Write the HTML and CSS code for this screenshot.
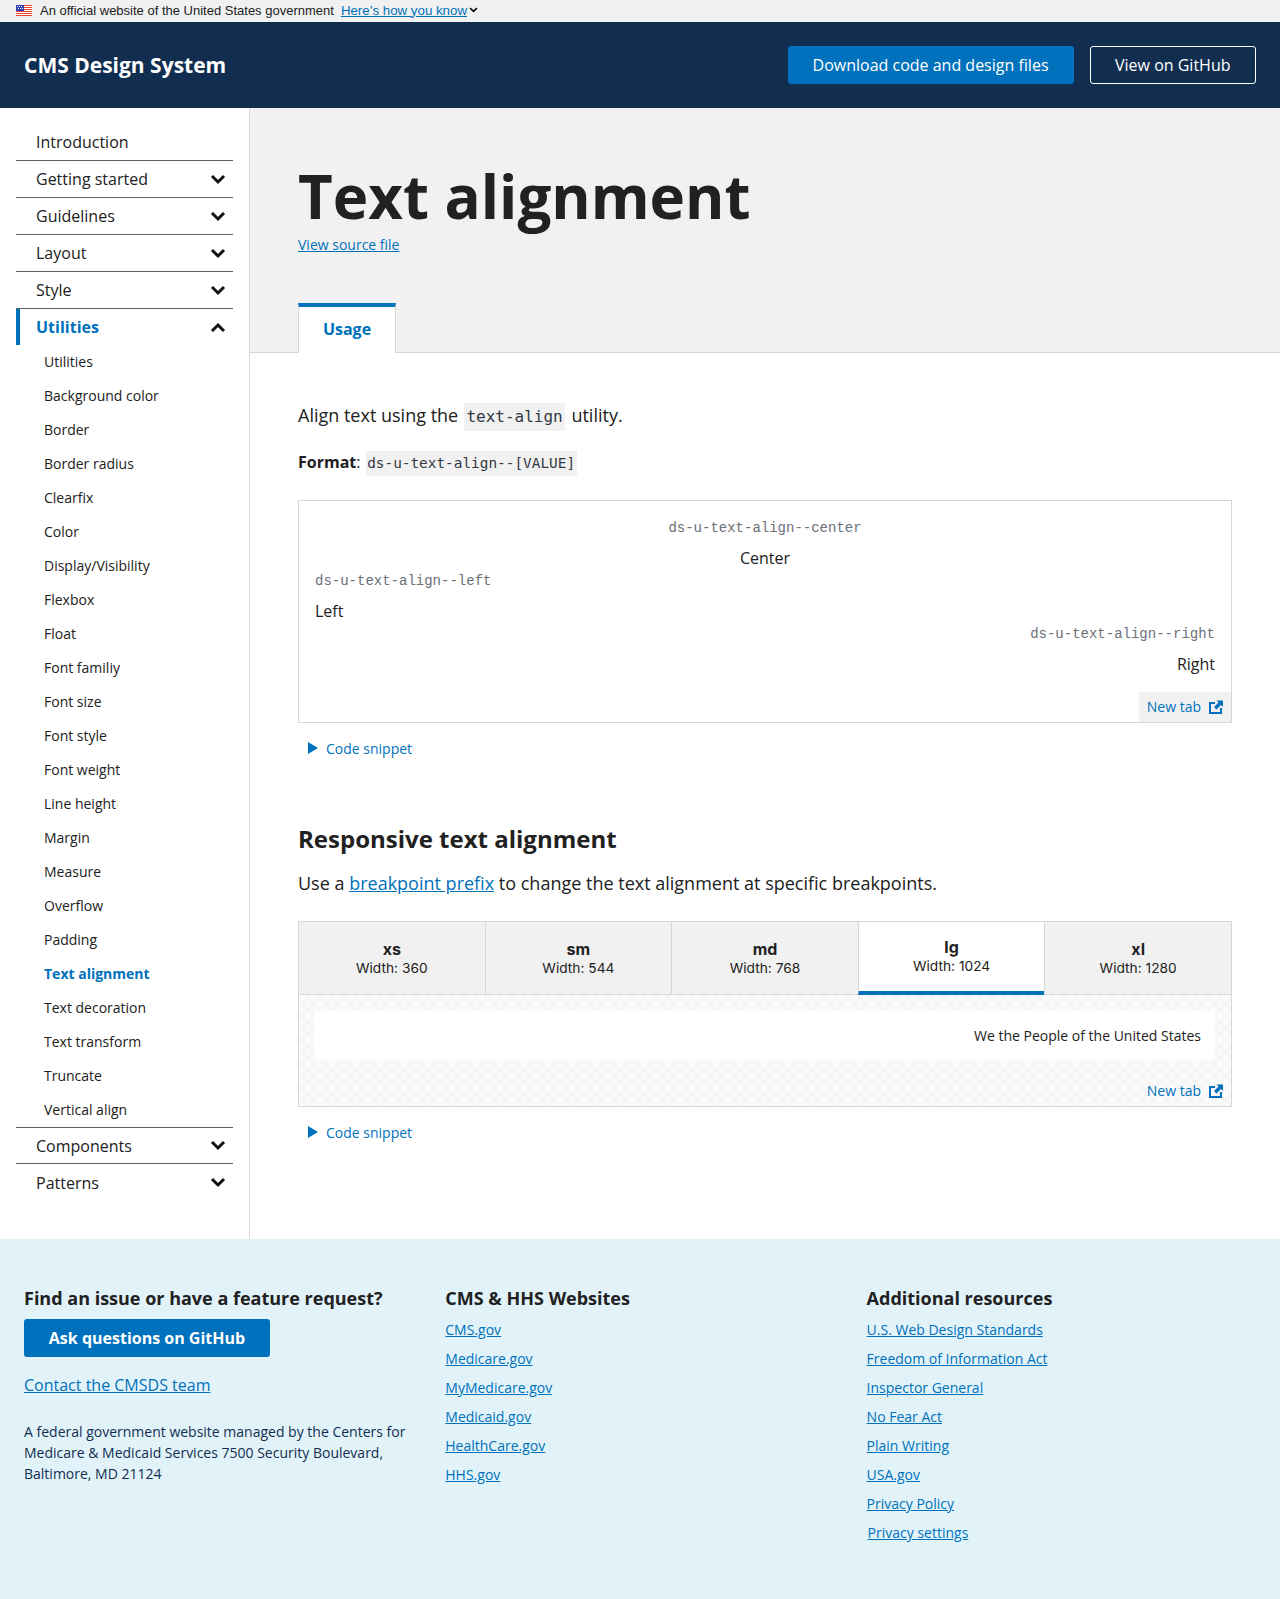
FILE: index.html
```html
<!DOCTYPE html>
<html lang="en">
<head>
<meta charset="utf-8">
<title>Text alignment</title>
<link rel="stylesheet" href="styles.css">
</head>
<body>
<div class="gov-banner">
  <svg class="flag" viewBox="0 0 16 11" width="16" height="11"><rect width="16" height="11" fill="#fff"/><path d="M0 0h16v1H0zM0 2h16v1H0zM0 4h16v1H0zM0 6h16v1H0zM0 8h16v1H0zM0 10h16v1H0z" fill="#e8452c"/><rect width="8" height="6" fill="#2f3db5"/><path d="M1 1h1v1H1zM3 1h1v1H3zM5 1h1v1H5zM2 3h1v1H2zM4 3h1v1H4zM6 3h1v1H6z" fill="#fff"/></svg>
  <span class="gov-text">An official website of the United States government</span>
  <a class="gov-link" href="#">Here’s how you know</a>
  <svg class="gov-caret" viewBox="0 0 10 7" width="9" height="6"><path d="M1 1.200 5 5l4-3.800" fill="none" stroke="#111" stroke-width="2"/></svg>
</div>
<header class="site-header">
  <a class="brand" href="#">CMS Design System</a>
  <div class="header-actions">
    <a class="btn btn-primary" href="#">Download code and design files</a>
    <a class="btn btn-outline" href="#">View on GitHub</a>
  </div>
</header>
<div class="layout">
  <nav class="sidebar">
    <ul class="nav-list">
      <li class="nav-item"><a href="#">Introduction</a></li>
      <li class="nav-item"><a href="#">Getting started</a><svg class="chev" viewBox="0 0 16 11"><path d="M2 2l6 6 6-6" /></svg></li>
      <li class="nav-item"><a href="#">Guidelines</a><svg class="chev" viewBox="0 0 16 11"><path d="M2 2l6 6 6-6" /></svg></li>
      <li class="nav-item"><a href="#">Layout</a><svg class="chev" viewBox="0 0 16 11"><path d="M2 2l6 6 6-6" /></svg></li>
      <li class="nav-item"><a href="#">Style</a><svg class="chev" viewBox="0 0 16 11"><path d="M2 2l6 6 6-6" /></svg></li>
      <li class="nav-item nav-open"><a href="#">Utilities</a><svg class="chev" viewBox="0 0 16 11"><path d="M2 9l6-6 6 6" /></svg></li>
      <li class="nav-sub">
        <ul class="sub-list">
          <li><a href="#">Utilities</a></li>
          <li><a href="#">Background color</a></li>
          <li><a href="#">Border</a></li>
          <li><a href="#">Border radius</a></li>
          <li><a href="#">Clearfix</a></li>
          <li><a href="#">Color</a></li>
          <li><a href="#">Display/Visibility</a></li>
          <li><a href="#">Flexbox</a></li>
          <li><a href="#">Float</a></li>
          <li><a href="#">Font familiy</a></li>
          <li><a href="#">Font size</a></li>
          <li><a href="#">Font style</a></li>
          <li><a href="#">Font weight</a></li>
          <li><a href="#">Line height</a></li>
          <li><a href="#">Margin</a></li>
          <li><a href="#">Measure</a></li>
          <li><a href="#">Overflow</a></li>
          <li><a href="#">Padding</a></li>
          <li><a class="sub-current" href="#">Text alignment</a></li>
          <li><a href="#">Text decoration</a></li>
          <li><a href="#">Text transform</a></li>
          <li><a href="#">Truncate</a></li>
          <li><a href="#">Vertical align</a></li>
        </ul>
      </li>
      <li class="nav-item nav-rule"><a href="#">Components</a><svg class="chev" viewBox="0 0 16 11"><path d="M2 2l6 6 6-6" /></svg></li>
      <li class="nav-item"><a href="#">Patterns</a><svg class="chev" viewBox="0 0 16 11"><path d="M2 2l6 6 6-6" /></svg></li>
    </ul>
  </nav>
  <main class="main">
    <section class="hero">
      <h1 class="page-title">Text alignment</h1>
      <a class="source-link" href="#">View source file</a>
      <div class="tabs"><a class="tab" href="#">Usage</a></div>
    </section>
    <section class="content">
      <p class="lead">Align text using the <code class="code-lg">text-align</code> utility.</p>
      <p class="format"><strong>Format</strong>: <code class="code-sm">ds-u-text-align--[VALUE]</code></p>
      <div class="demo">
        <div class="demo-body">
          <div class="center-align"><div class="cls">ds-u-text-align--center</div><p class="demo-text">Center</p></div>
          <div><div class="cls">ds-u-text-align--left</div><p class="demo-text">Left</p></div>
          <div class="right-align"><div class="cls">ds-u-text-align--right</div><p class="demo-text">Right</p></div>
        </div>
        <a class="new-tab" href="#">New tab
          <svg class="ext" viewBox="0 0 14 14"><path d="M12 8v5H1V3h5" fill="none" stroke="#0071bc" stroke-width="2"/><path d="M7.500 0.500H14V7l-2-2-4.500 4.500-2.500-2.500L9.500 2.500z" fill="#0071bc"/></svg>
        </a>
      </div>
      <a class="snippet" href="#"><span class="tri"></span>Code snippet</a>
      <h2 class="section-title">Responsive text alignment</h2>
      <p class="lead-2">Use a <a href="#">breakpoint prefix</a> to change the text alignment at specific breakpoints.</p>
      <div class="bp-demo">
        <div class="bp-tabs">
          <div class="bp-tab"><b>xs</b><span>Width: 360</span></div>
          <div class="bp-tab"><b>sm</b><span>Width: 544</span></div>
          <div class="bp-tab"><b>md</b><span>Width: 768</span></div>
          <div class="bp-tab bp-active"><b>lg</b><span>Width: 1024</span></div>
          <div class="bp-tab"><b>xl</b><span>Width: 1280</span></div>
        </div>
        <div class="bp-canvas">
          <div class="bp-frame">We the People of the United States</div>
          <a class="new-tab new-tab-clear" href="#">New tab
            <svg class="ext" viewBox="0 0 14 14"><path d="M12 8v5H1V3h5" fill="none" stroke="#0071bc" stroke-width="2"/><path d="M7.500 0.500H14V7l-2-2-4.500 4.500-2.500-2.500L9.500 2.500z" fill="#0071bc"/></svg>
          </a>
        </div>
      </div>
      <a class="snippet" href="#"><span class="tri"></span>Code snippet</a>
    </section>
  </main>
</div>
<footer class="footer">
  <div class="foot-col">
    <h3>Find an issue or have a feature request?</h3>
    <a class="foot-btn" href="#">Ask questions on GitHub</a>
    <a class="foot-contact" href="#">Contact the CMSDS team</a>
    <p class="foot-note">A federal government website managed by the Centers for Medicare &amp; Medicaid Services 7500 Security Boulevard, Baltimore, MD 21124</p>
  </div>
  <div class="foot-col">
    <h3>CMS &amp; HHS Websites</h3>
    <ul class="foot-links">
      <li><a href="#">CMS.gov</a></li>
      <li><a href="#">Medicare.gov</a></li>
      <li><a href="#">MyMedicare.gov</a></li>
      <li><a href="#">Medicaid.gov</a></li>
      <li><a href="#">HealthCare.gov</a></li>
      <li><a href="#">HHS.gov</a></li>
    </ul>
  </div>
  <div class="foot-col">
    <h3>Additional resources</h3>
    <ul class="foot-links">
      <li><a href="#">U.S. Web Design Standards</a></li>
      <li><a href="#">Freedom of Information Act</a></li>
      <li><a href="#">Inspector General</a></li>
      <li><a href="#">No Fear Act</a></li>
      <li><a href="#">Plain Writing</a></li>
      <li><a href="#">USA.gov</a></li>
      <li><a href="#">Privacy Policy</a></li>
      <li><a class="shifted" href="#">Privacy settings</a></li>
    </ul>
  </div>
</footer>
</body>
</html>
```

FILE: styles.css
```css
* { box-sizing: border-box; }
html, body { margin: 0; padding: 0; }
body { font-family: "Open Sans", sans-serif; color: #212121; background: #fff; width: 1280px; }
ul { list-style: none; margin: 0; padding: 0; }
a { color: #0071bc; }

.gov-banner { height: 22px; background: #f1f1f1; display: flex; align-items: center; padding: 0 0 2px 16px; font-family: "Liberation Sans", Arial, sans-serif; font-size: 13px; }
.flag { margin-right: 8px; flex: none; }
.gov-text { margin-right: 7px; color: #212121; }
.gov-link { color: #0071bc; font-size: 13.300px; }
.gov-caret { margin-left: 2px; }

.site-header { height: 86px; background: #112e51; display: flex; align-items: center; justify-content: space-between; padding: 0 24px; }
.brand { color: #fff; font-size: 21px; font-weight: 700; text-decoration: none; }
.header-actions { display: flex; gap: 16px; }
.btn { display: block; height: 38px; line-height: 38px; padding: 0 25px; border-radius: 3px; color: #fff; font-size: 16px; text-decoration: none; font-weight: 500; }
.btn-primary { background: #0071bc; }
.btn-outline { border: 1px solid #fff; line-height: 36px; padding: 0 24.500px; }

.layout { display: flex; height: 1131px; }
.sidebar { width: 250px; flex: none; border-right: 1px solid #d6d7d9; padding: 16px 16px 0; }
.nav-item { height: 37px; display: flex; align-items: center; justify-content: space-between; padding: 0 7px 0 20px; border-bottom: 1px solid #5b616b; font-size: 16px; }
.nav-item a { color: #212121; text-decoration: none; }
.nav-item:last-child { border-bottom: 0; }
.chev { width: 16px; height: 11px; }
.chev path { fill: none; stroke: #111; stroke-width: 3; }
.nav-open { border-bottom: 0; border-left: 4px solid #0071bc; padding-left: 16px; height: 36px; }
.nav-open a { color: #0071bc; font-weight: 700; }
.nav-rule { border-top: 1px solid #5b616b; height: 37px; }
.nav-sub { padding: 0 0 0 28px; margin: -1px 0 1px; }
.sub-list li { height: 34px; display: flex; align-items: center; font-size: 14px; }
.sub-list a { color: #212121; text-decoration: none; }
.sub-list .sub-current { color: #0071bc; font-weight: 700; }

.main { flex: 1; min-width: 0; }
.hero { height: 245px; background: #f1f1f1; padding: 50px 48px 0; border-bottom: 1px solid #d6d7d9; position: relative; }
.page-title { margin: 0; font-size: 60px; line-height: 76px; font-weight: 700; color: #212121; }
.source-link { display: block; font-size: 14px; line-height: 20px; margin-top: 1px; }
.tabs { position: absolute; left: 48px; bottom: -1px; }
.tab { display: flex; align-items: center; justify-content: center; width: 98px; height: 50px; padding-bottom: 3px; background: #fff; border: 1px solid #d6d7d9; border-bottom: 0; border-top: 4px solid #0071bc; color: #0071bc; font-size: 16px; font-weight: 700; text-decoration: none; }

.content { padding: 0 48px; }
.lead { margin: 47px 0 0; font-size: 18px; line-height: 30px; }
.code-lg { display: inline-block; font-family: "DejaVu Sans Mono", monospace; font-size: 16px; background: #f1f1f1; padding: 0 2.500px; line-height: 28px; margin: 0 1.500px 0 1px; color: #323a45; }
.format { margin: 18px 0 0; font-size: 16px; line-height: 26px; }
.code-sm { display: inline-block; font-family: "DejaVu Sans Mono", monospace; font-size: 14.400px; background: #f1f1f1; padding: 0 1.500px; line-height: 25px; color: #323a45; margin-left: 1px; }
.demo { margin-top: 24px; border: 1px solid #d6d7d9; height: 223px; position: relative; padding: 16px; }
.cls { font-family: "Liberation Mono", monospace; font-size: 14px; line-height: 23px; color: #6b7079; }
.demo-text { margin: 6px 0 0; font-size: 16px; line-height: 24px; }
.center-align { text-align: center; }
.right-align { text-align: right; }
.new-tab { position: absolute; right: 0; bottom: 0; height: 30px; display: flex; align-items: center; padding: 0 8px 1px; background: #f1f1f1; color: #0071bc; font-size: 14px; text-decoration: none; gap: 8px; }
.new-tab-clear { background: transparent; }
.ext { width: 14px; height: 14px; }
.snippet { display: flex; align-items: center; margin: 15px 0 0 10px; height: 20px; font-size: 14px; text-decoration: none; }
.tri { width: 0; height: 0; border-left: 10px solid #0071bc; border-top: 6px solid transparent; border-bottom: 6px solid transparent; margin-right: 8px; }
.section-title { margin: 63px 0 0; font-size: 24px; line-height: 36px; font-weight: 700; }
.lead-2 { margin: 11px 0 0; font-size: 18px; line-height: 30px; }
.bp-demo { margin-top: 23px; border: 1px solid #d6d7d9; height: 186px; }
.bp-tabs { display: flex; height: 73px; border-bottom: 1px solid #d6d7d9; font-family: Inter, sans-serif; }
.bp-tab { flex: 1; display: flex; flex-direction: column; align-items: center; justify-content: center; background: #f1f1f1; border-left: 1px solid #d6d7d9; font-size: 13.750px; color: #212121; line-height: 18px; }
.bp-tab:first-child { border-left: 0; }
.bp-tab b { font-size: 16px; font-weight: 700; line-height: 19px; }
.bp-active { background: #fff; border-bottom: 4px solid #0071bc; height: 73px; }
.bp-canvas { position: relative; height: 111px; padding: 16px; background-color: #fbfbfb; background-image: linear-gradient(45deg, #f6f6f6 25%, transparent 25%, transparent 75%, #f6f6f6 75%), linear-gradient(45deg, #f6f6f6 25%, transparent 25%, transparent 75%, #f6f6f6 75%); background-size: 12px 12px; background-position: 0 0, 6px 6px; }
.bp-frame { background: #fff; height: 49px; line-height: 49px; text-align: right; padding-right: 14px; font-size: 14px; }

.footer { height: 360px; background: #e1f3f8; padding: 46px 24px 0; display: grid; grid-template-columns: repeat(3, 421.300px); }
.foot-col h3 { margin: 0; font-size: 18px; line-height: 27px; font-weight: 700; color: #212121; }
.foot-btn { display: block; width: 246px; height: 38px; margin-top: 7px; background: #0071bc; color: #fff; border-radius: 3px; text-align: center; line-height: 38px; font-size: 16px; font-weight: 700; text-decoration: none; }
.foot-contact { display: block; margin-top: 16px; font-size: 16px; line-height: 24px; }
.foot-note { margin: 24px 0 0; font-size: 14px; line-height: 21px; color: #112e51; width: 390px; }
.foot-links { margin-top: 3px; }
.foot-links li { height: 29px; line-height: 29px; font-size: 14px; }
.shifted { margin-left: 1px; }
```
